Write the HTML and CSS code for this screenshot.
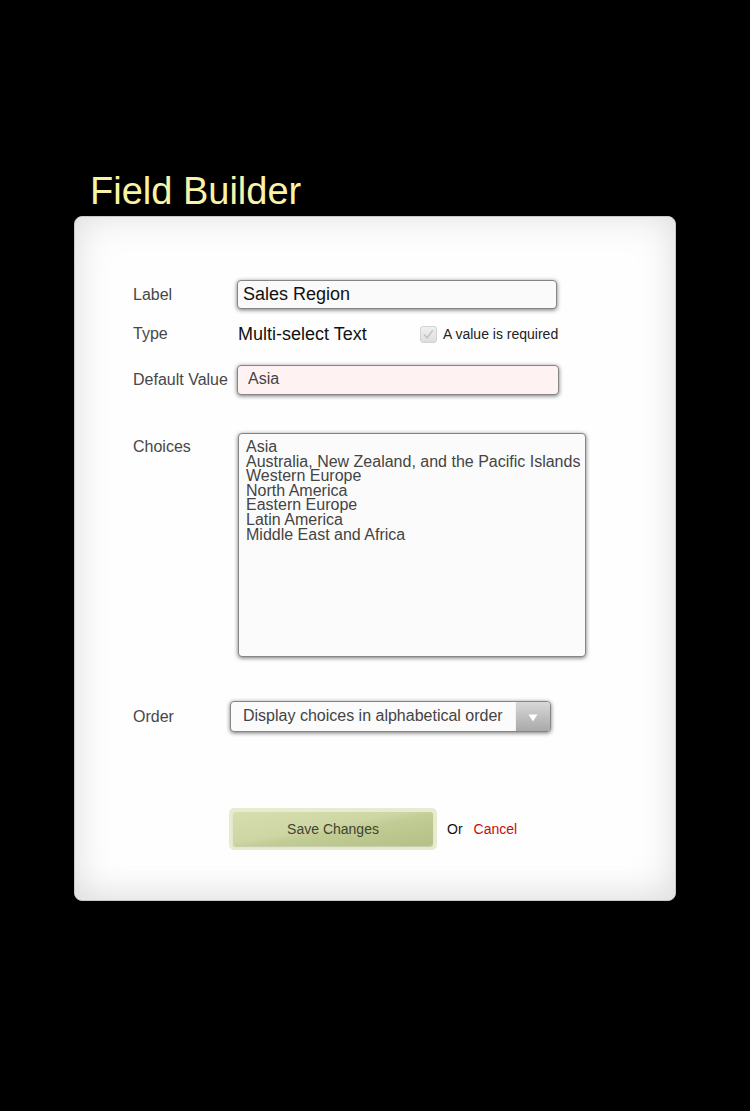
FILE: index.html
```html
<!DOCTYPE html>
<html>
<head>
<meta charset="utf-8">
<title>Field Builder</title>
<link rel="stylesheet" href="styles.css">
</head>
<body>
<div class="page">
  <h1 class="title">Field Builder</h1>
  <div class="panel">
    <div class="row row-label">
      <div class="lbl">Label</div>
      <div class="field text-input">Sales Region</div>
    </div>
    <div class="row row-type">
      <div class="lbl">Type</div>
      <div class="type-value">Multi-select Text</div>
      <div class="req">
        <span class="check">
          <svg width="11" height="11" viewBox="0 0 11 11"><path d="M1.5 6 L4.2 8.8 L9.5 1.8" fill="none" stroke="#c4c4c4" stroke-width="1.6" stroke-linecap="round" stroke-linejoin="round"/></svg>
        </span>
        <span class="req-text">A value is required</span>
      </div>
    </div>
    <div class="row row-default">
      <div class="lbl">Default Value</div>
      <div class="field default-input">Asia</div>
    </div>
    <div class="row row-choices">
      <div class="lbl lbl-top">Choices</div>
      <div class="field choices-box">
        <div>Asia</div>
        <div>Australia, New Zealand, and the Pacific Islands</div>
        <div>Western Europe</div>
        <div>North America</div>
        <div>Eastern Europe</div>
        <div>Latin America</div>
        <div>Middle East and Africa</div>
      </div>
    </div>
    <div class="row row-order">
      <div class="lbl">Order</div>
      <div class="field select-box">
        <span class="select-text">Display choices in alphabetical order</span>
        <span class="select-arrow">
          <svg width="10" height="8" viewBox="0 0 10 8"><path d="M0.5 0.5 H9.5 L5 7.5 Z" fill="#ffffff"/></svg>
        </span>
      </div>
    </div>
    <div class="row row-actions">
      <div class="lbl"></div>
      <div class="btn-wrap"><div class="btn">Save Changes</div></div>
      <span class="or">Or</span>
      <span class="cancel">Cancel</span>
    </div>
  </div>
</div>
</body>
</html>
```

FILE: styles.css
```css
html, body {
  margin: 0;
  padding: 0;
  background: #000;
}
body {
  font-family: "Liberation Sans", Arial, sans-serif;
  width: 750px;
  height: 1111px;
}
.page {
  padding-top: 168px;
}
.title {
  margin: 0;
  padding-left: 90px;
  height: 48px;
  line-height: 46px;
  font-size: 38px;
  font-weight: normal;
  color: #faf3a6;
}
.panel {
  margin-left: 74px;
  border: 1px solid #c8c8c8;
  border-radius: 8px;
  background: #fefefe;
  box-shadow: inset 0 0 40px rgba(0, 0, 0, 0.11), inset 0 -10px 30px rgba(0, 0, 0, 0.04);
  padding: 63px 0 0 58px;
  box-sizing: border-box;
  height: 685px;
  width: 602px;
}
.row {
  display: flex;
  align-items: center;
}
.lbl {
  width: 104px;
  flex: none;
  font-size: 16px;
  color: #474747;
}
.lbl-top {
  align-self: flex-start;
  padding-top: 5px;
}
.field {
  box-sizing: border-box;
  border: 1px solid #858585;
  border-radius: 4px;
  box-shadow: 0 1px 4px rgba(0, 0, 0, 0.55);
  background: #fafafa;
}
.text-input {
  width: 320px;
  height: 29px;
  padding: 3px 0 0 5px;
  font-size: 18px;
  color: #111;
}
.row-type {
  margin-top: 14px;
  height: 22px;
}
.type-value {
  width: 182px;
  font-size: 18px;
  color: #111;
  margin-left: 1px;
}
.req {
  display: flex;
  align-items: center;
  gap: 6px;
}
.check {
  width: 17px;
  height: 17px;
  box-sizing: border-box;
  border: 1px solid #d2d2d2;
  border-radius: 3px;
  background: linear-gradient(#f0f0f0, #dedede);
  display: flex;
  align-items: center;
  justify-content: center;
}
.req-text {
  font-size: 14px;
  color: #222;
}
.row-default {
  margin-top: 20px;
}
.default-input {
  width: 322px;
  height: 30px;
  padding: 4px 0 0 10px;
  font-size: 16px;
  color: #444;
  background: #fff2f2;
}
.row-choices {
  margin-top: 38px;
  align-items: flex-start;
}
.choices-box {
  margin-left: 1px;
  width: 348px;
  height: 224px;
  padding: 6px 0 0 7px;
  font-size: 16px;
  line-height: 14.6px;
  color: #444;
  white-space: nowrap;
  background: #fbfbfb;
}
.row-order {
  margin-top: 44px;
}
.select-box {
  margin-left: -7px;
  width: 321px;
  height: 31px;
  display: flex;
  align-items: stretch;
  overflow: hidden;
  background: #fbfbfb;
}
.select-text {
  flex: 1;
  padding: 5px 0 0 12px;
  font-size: 16px;
  color: #444;
}
.select-arrow {
  width: 35px;
  flex: none;
  border-left: 1px solid #f4f4f4;
  background: linear-gradient(#d8d8d8, #a9a9a9);
  display: flex;
  align-items: center;
  justify-content: center;
  padding-top: 2px;
  box-sizing: border-box;
}
.row-actions {
  margin-top: 76px;
}
.btn-wrap {
  margin-left: -8px;
  width: 208px;
  height: 42px;
  box-sizing: border-box;
  padding: 4px;
  border-radius: 5px;
  background: #e7ebcf;
}
.btn {
  height: 34px;
  border-radius: 3px;
  background: linear-gradient(170deg, #d7deb0 0%, #cdd6a3 45%, #c2cc95 55%, #b3c087 100%);
  box-shadow: 0 1px 1px rgba(100, 110, 60, 0.25);
  font-size: 14px;
  color: #3e4432;
  text-align: center;
  line-height: 34px;
}
.or {
  margin-left: 10px;
  font-size: 14px;
  color: #111;
}
.cancel {
  margin-left: 11px;
  font-size: 14px;
  color: #c40d0d;
}
```
